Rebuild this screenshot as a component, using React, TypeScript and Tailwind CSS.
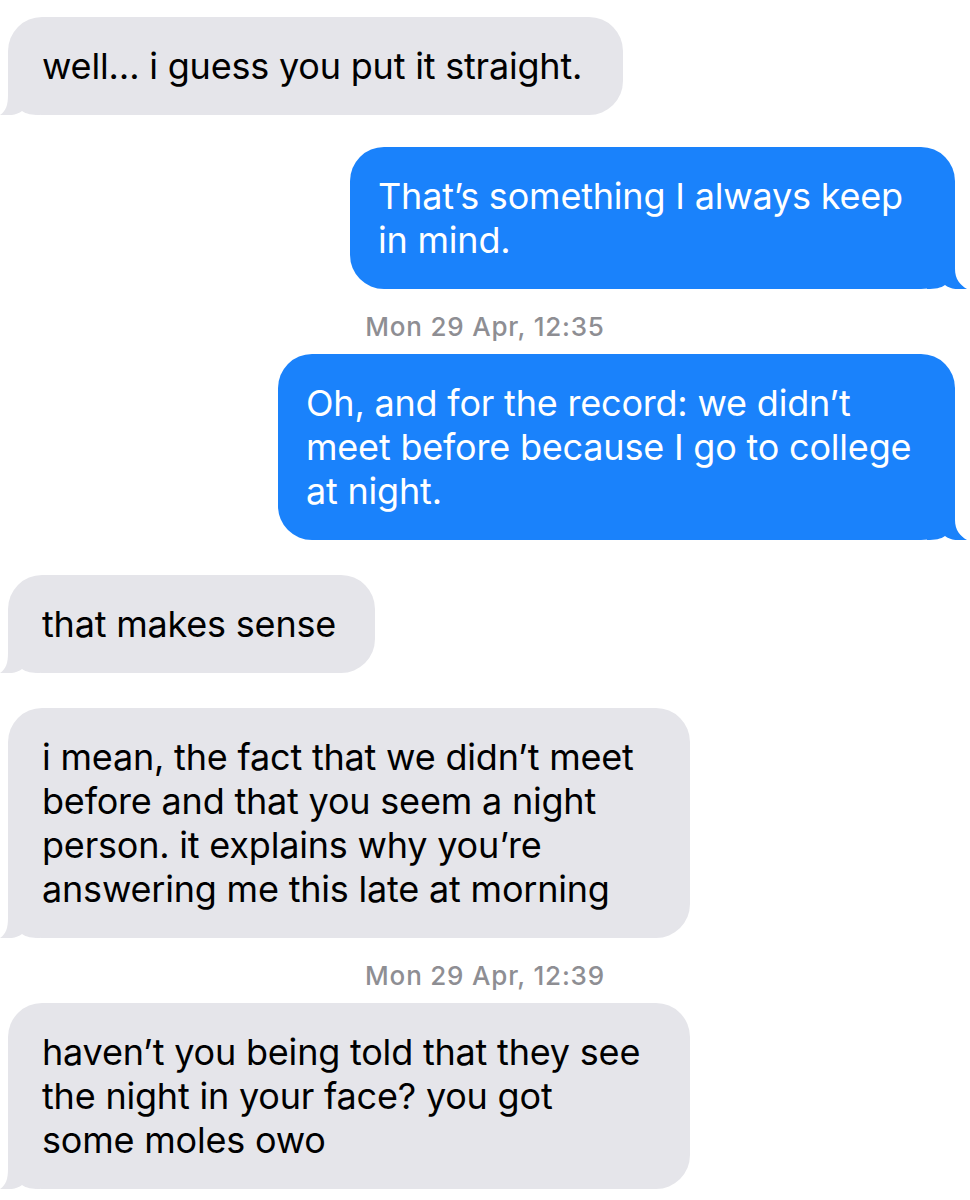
type Bubble = {
  kind: 'bubble'
  mine: boolean
  width: string
  lines: string[]
}

type Stamp = {
  kind: 'stamp'
  text: string
}

const items: (Bubble | Stamp)[] = [
  { kind: 'bubble', mine: false, width: 'w-[615px]', lines: ['well… i guess you put it straight.'] },
  { kind: 'bubble', mine: true, width: 'w-[605px]', lines: ['That’s something I always keep', 'in mind.'] },
  { kind: 'stamp', text: 'Mon 29 Apr, 12:35' },
  {
    kind: 'bubble',
    mine: true,
    width: 'w-[677px]',
    lines: ['Oh, and for the record: we didn’t', 'meet before because I go to college', 'at night.'],
  },
  { kind: 'bubble', mine: false, width: 'w-[367px]', lines: ['that makes sense'] },
  {
    kind: 'bubble',
    mine: false,
    width: 'w-[682px]',
    lines: [
      'i mean, the fact that we didn’t meet',
      'before and that you seem a night',
      'person. it explains why you’re',
      'answering me this late at morning',
    ],
  },
  { kind: 'stamp', text: 'Mon 29 Apr, 12:39' },
  {
    kind: 'bubble',
    mine: false,
    width: 'w-[682px]',
    lines: ['haven’t you being told that they see', 'the night in your face? you got', 'some moles owo'],
  },
]

function Tail({ mine }: { mine: boolean }) {
  // little hook at the bottom corner, mirrored for sent messages
  if (mine) {
    return (
      <svg
        className="absolute bottom-0 -right-[12px] w-[40px] h-[40px]"
        viewBox="0 0 40 40"
        fill="#1a82fb"
      >
        <path d="M28 0 L0 0 L0 40 C8 40 14 39 18 36 C23 40 31 41 40 40 C33 36 28 30 28 20 Z" />
      </svg>
    )
  }
  return (
    <svg
      className="absolute bottom-0 -left-[8px] w-[40px] h-[40px]"
      viewBox="0 0 40 40"
      fill="#e5e5ea"
    >
      <path d="M8 0 L40 0 L40 40 C32 40 26 39 22 36 C17 40 9 41 0 40 C6 36 8 30 8 20 Z" />
    </svg>
  )
}

function MessageBubble({ b }: { b: Bubble }) {
  return (
    <div className={b.mine ? 'flex justify-end pr-[15px]' : 'flex justify-start pl-[8px]'}>
      <div
        className={
          b.mine
            ? `relative ${b.width} rounded-[34px] bg-[#1a82fb] text-white pl-[28px] pr-[20px] py-[27px]`
            : `relative ${b.width} rounded-[34px] bg-[#e5e5ea] text-black pl-[34px] pr-[20px] py-[27px]`
        }
      >
        <Tail mine={b.mine} />
        <div className="relative text-[36px] leading-[44px] whitespace-nowrap tracking-[-0.2px]">
          {b.lines.map((l, i) => (
            <div key={i}>{l}</div>
          ))}
        </div>
      </div>
    </div>
  )
}

export default function App() {
  return (
    <div
      className="w-[970px] h-[1200px] bg-white overflow-hidden pt-[17px]"
      style={{ fontFamily: 'Inter, Roboto, "Liberation Sans", sans-serif' }}
    >
      <div className="flex flex-col">
        {items.map((it, i) => {
          const prev = items[i - 1]
          if (it.kind === 'stamp') {
            return (
              <div
                key={i}
                className="text-center text-[26px] leading-[28px] font-medium tracking-[0.8px] text-[#8e8e93] mt-[24px] mb-[13px]"
              >
                {it.text}
              </div>
            )
          }
          const gap = !prev ? '' : prev.kind === 'stamp' ? '' : i === 1 ? 'mt-[32px]' : 'mt-[35px]'
          return (
            <div key={i} className={gap}>
              <MessageBubble b={it} />
            </div>
          )
        })}
      </div>
    </div>
  )
}
